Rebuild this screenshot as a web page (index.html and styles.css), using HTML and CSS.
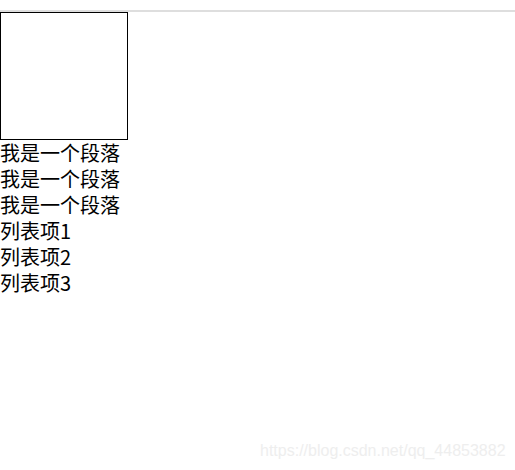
FILE: index.html
```html
<!DOCTYPE html>
<html lang="zh-CN">
<head>
<meta charset="utf-8">
<title>段落</title>
<link rel="stylesheet" href="styles.css">
</head>
<body>
<div class="topline"></div>
<div class="box"></div>
<p class="para">我是一个段落</p>
<p class="para">我是一个段落</p>
<p class="para">我是一个段落</p>
<ul class="list">
  <li>列表项1</li>
  <li>列表项2</li>
  <li>列表项3</li>
</ul>
<div class="watermark">https://blog.csdn.net/qq_44853882</div>
</body>
</html>
```
FILE: styles.css
```css
html, body {
  margin: 0;
  padding: 0;
  background: #ffffff;
}
body {
  position: relative;
  width: 515px;
  height: 470px;
  overflow: hidden;
  font-family: "Noto Sans CJK SC", "Noto Sans", sans-serif;
  font-size: 20px;
  line-height: 26px;
  color: #000000;
}
.topline {
  margin-top: 10px;
  height: 2px;
  background: #dedede;
}
.box {
  width: 126px;
  height: 126px;
  border: 1px solid #000000;
}
.para {
  margin: 0;
}
.list {
  margin: 0;
  padding: 0;
  list-style: none;
}
.watermark {
  position: absolute;
  left: 260px;
  top: 441px;
  font-family: "Liberation Sans", Arial, sans-serif;
  font-size: 16px;
  line-height: 20px;
  color: #eeeeee;
  white-space: nowrap;
}
```
